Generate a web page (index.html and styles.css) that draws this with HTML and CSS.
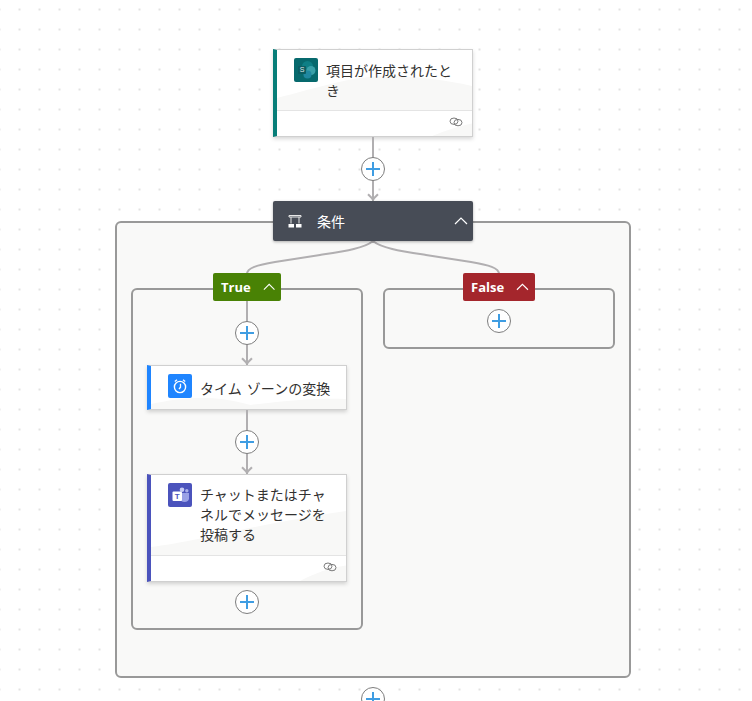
FILE: index.html
```html
<!DOCTYPE html>
<html lang="ja">
<head>
    <meta charset="UTF-8">
    <meta name="viewport" content="width=device-width, initial-scale=1.0">
    <title>フロー</title>
    <link rel="stylesheet" href="styles.css">
</head>
<body>
    <div class="canvas">

        <!-- Trigger -->
        <div class="card card-sharepoint">
            <div class="card-body">
                <svg class="hill" viewBox="0 0 196 60" preserveAspectRatio="none"><path d="M0 48 C40 38 75 26 110 26 C140 26 170 30 196 36 V60 H0 Z"/></svg>
                <svg class="card-icon" viewBox="0 0 24 24">
                    <rect width="24" height="24" rx="2" fill="#07696d"/>
                    <circle cx="13.5" cy="8.5" r="5.5" fill="#0e7f85"/>
                    <circle cx="17" cy="12.5" r="4.5" fill="#3aa0a8"/>
                    <circle cx="13.5" cy="16.5" r="4" fill="#2088a0"/>
                    <rect x="4" y="8" width="8" height="8" rx="1" fill="#0b5d62"/>
                    <text x="8" y="14.4" class="icon-letter sp-letter">S</text>
                </svg>
                <div class="card-title">項目が作成されたとき</div>
            </div>
            <div class="card-footer">
                <svg class="hill" viewBox="0 0 196 26" preserveAspectRatio="none"><path d="M156 26 C170 20 182 16 196 13 V26 Z"/></svg>
                <svg class="link-icon" viewBox="0 0 14 10"><ellipse cx="5" cy="4.2" rx="4" ry="3.2"/><ellipse cx="9" cy="5.6" rx="4" ry="3.2"/></svg>
            </div>
        </div>

        <div class="link arrow"><button class="plus"></button></div>

        <!-- Condition -->
        <div class="scope">
            <div class="scope-header">
                <svg class="scope-icon" viewBox="0 0 14 13">
                    <path d="M1 0.5H13V2H1ZM3 2V8.5M11 2V8.5" fill="none" stroke="#e8e8e8" stroke-width="1"/>
                    <rect x="0.5" y="9" width="5.5" height="3.5" fill="#fff"/>
                    <rect x="8" y="9" width="5.5" height="3.5" fill="#fff"/>
                </svg>
                <span class="scope-title">条件</span>
                <svg class="chevron" viewBox="0 0 14 8"><path d="M1 7L7 1L13 7"/></svg>
            </div>

            <div class="scope-box">
                <svg class="curves" viewBox="0 0 256 34"><path d="M128 0 C120 7 100 10 75 14 L30 21 C12 24 2 27 2 33 M128 0 C136 7 156 10 181 14 L226 21 C244 24 254 27 254 33"/></svg>

                <div class="branches">
                    <div class="branch">
                        <div class="badge badge-true">True <svg class="chevron" viewBox="0 0 14 8"><path d="M1 7L7 1L13 7"/></svg></div>
                        <div class="branch-box">
                            <div class="link arrow"><button class="plus"></button></div>

                            <div class="card card-clock">
                                <div class="card-body">
                                    <svg class="hill" viewBox="0 0 196 43" preserveAspectRatio="none"><path d="M0 38 C30 32 60 28 100 39 C140 34 170 32 196 33 V43 H0 Z"/></svg>
                                    <svg class="card-icon" viewBox="0 0 24 24">
                                        <rect width="24" height="24" rx="2" fill="#1f85ff"/>
                                        <circle cx="12" cy="13" r="5.6" fill="none" stroke="#fff" stroke-width="1.4"/>
                                        <path d="M12.5 9.8V13.2L11 15M6.8 7.6L9 5.8M17.2 7.6L15 5.8" fill="none" stroke="#fff" stroke-width="1.3"/>
                                    </svg>
                                    <div class="card-title single">タイム ゾーンの変換</div>
                                </div>
                            </div>

                            <div class="link arrow"><button class="plus"></button></div>

                            <div class="card card-teams">
                                <div class="card-body">
                                    <svg class="hill" viewBox="0 0 196 80" preserveAspectRatio="none"><path d="M0 80 V72 C50 66 100 50 196 36 V80 Z"/></svg>
                                    <svg class="card-icon" viewBox="0 0 24 24">
                                        <rect width="24" height="24" rx="2" fill="#4b53bc"/>
                                        <circle cx="14" cy="6.8" r="2.3" fill="#c6cbf3"/>
                                        <circle cx="18.8" cy="7.8" r="1.7" fill="#aab0ea"/>
                                        <path d="M12 10H21V15.5C21 17.5 19 19 16.5 19C14 19 12 17.5 12 15.5Z" fill="#9aa1e6"/>
                                        <rect x="4.5" y="8.5" width="9.5" height="9.5" rx="1" fill="#fff"/>
                                        <text x="9.2" y="16" class="icon-letter teams-letter">T</text>
                                    </svg>
                                    <div class="card-title">チャットまたはチャネルでメッセージを投稿する</div>
                                </div>
                                <div class="card-footer">
                                    <svg class="hill" viewBox="0 0 196 26" preserveAspectRatio="none"><path d="M150 26 C165 18 180 12 196 10 V26 Z"/></svg>
                                    <svg class="link-icon" viewBox="0 0 14 10"><ellipse cx="5" cy="4.2" rx="4" ry="3.2"/><ellipse cx="9" cy="5.6" rx="4" ry="3.2"/></svg>
                                </div>
                            </div>

                            <button class="plus plus-end"></button>
                        </div>
                    </div>

                    <div class="branch">
                        <div class="badge badge-false">False <svg class="chevron" viewBox="0 0 14 8"><path d="M1 7L7 1L13 7"/></svg></div>
                        <div class="branch-box branch-empty">
                            <button class="plus"></button>
                        </div>
                    </div>
                </div>
            </div>
        </div>

        <div class="link link-last"><button class="plus"></button></div>
    </div>
</body>
</html>
```

FILE: styles.css
```css
html, body {
    height: 100%;
    margin: 0;
    overflow: hidden;
}

body {
    font-family: "Noto Sans CJK JP", "Noto Sans", sans-serif;
    color: #323130;
    background-color: #fff;
    background-image: radial-gradient(circle at center, #e2e2e2 1px, transparent 1.2px);
    background-size: 20px 20px;
    background-position: 9.5px -0.5px;
}

.canvas {
    width: 746px;
    padding-top: 49px;
    display: flex;
    flex-direction: column;
    align-items: center;
}

/* cards */
.card {
    position: relative;
    width: 200px;
    box-sizing: border-box;
    background: #fff;
    border: 1px solid #d0d0d0;
    border-left: 4px solid #077d78;
    box-shadow: 0 2px 4px rgba(0, 0, 0, 0.16);
    flex-shrink: 0;
}

.card-sharepoint { border-left-color: #077d78; }
.card-clock { border-left-color: #1f85ff; }
.card-teams { border-left-color: #4b53bc; }

.card-body {
    position: relative;
    display: flex;
    align-items: flex-start;
    gap: 8px;
    padding: 8px 10px 10px 17px;
}

.card-clock .card-body {
    padding-bottom: 11px;
}

.card-icon {
    position: relative;
    width: 24px;
    height: 24px;
    flex-shrink: 0;
}

.icon-letter {
    font-family: "Liberation Sans", sans-serif;
    font-size: 8px;
    font-weight: 700;
    fill: #fff;
    text-anchor: middle;
}

.sp-letter {
    font-size: 7px;
    font-weight: 400;
    opacity: 0.85;
}

.teams-letter {
    fill: #4b53bc;
}

.card-title {
    position: relative;
    width: 130px;
    margin-top: 2px;
    font-size: 14px;
    line-height: 20px;
}

.card-teams .card-title {
    margin-top: 1px;
    margin-bottom: 1px;
}

.card-title.single {
    width: 140px;
    margin-top: 4px;
    white-space: nowrap;
    word-spacing: 2px;
}

.card-footer {
    position: relative;
    height: 26px;
    border-top: 1px solid #e4e4e4;
    box-sizing: border-box;
    display: flex;
    justify-content: flex-end;
    padding: 6px 9px 0 0;
}

.hill {
    position: absolute;
    left: 0;
    bottom: 0;
    width: 100%;
    height: 100%;
    fill: #f8f8f7;
}

.link-icon {
    position: relative;
    width: 14px;
    height: 10px;
    fill: none;
    stroke: #7a7a7a;
    stroke-width: 1;
}

/* connectors */
.link {
    position: relative;
    width: 24px;
    height: 64px;
    display: flex;
    align-items: center;
    justify-content: center;
    flex-shrink: 0;
}

.link::before {
    content: "";
    position: absolute;
    top: 0;
    bottom: 0;
    left: 11px;
    width: 2px;
    background: #b1afb1;
}

.arrow::after {
    content: "";
    position: absolute;
    left: 8px;
    bottom: 2px;
    width: 8px;
    height: 8px;
    box-sizing: border-box;
    border-right: 2px solid #b1afb1;
    border-bottom: 2px solid #b1afb1;
    transform: rotate(45deg);
}

.link-last {
    height: 24px;
    margin-top: 9px;
}

.link-last::before {
    display: none;
}

.plus {
    position: relative;
    width: 24px;
    height: 24px;
    padding: 0;
    box-sizing: border-box;
    border: 1px solid #7d7d7d;
    border-radius: 50%;
    background: #fff;
    flex-shrink: 0;
}

.plus::before,
.plus::after {
    content: "";
    position: absolute;
    background: #3f9de2;
}

.plus::before {
    left: 4px;
    right: 4px;
    top: 10px;
    height: 2px;
}

.plus::after {
    top: 4px;
    bottom: 4px;
    left: 10px;
    width: 2px;
}

.plus-end {
    margin-top: 8px;
}

/* condition */
.scope {
    display: flex;
    flex-direction: column;
    align-items: center;
}

.scope-header {
    position: relative;
    z-index: 2;
    width: 200px;
    height: 40px;
    box-sizing: border-box;
    display: flex;
    align-items: center;
    padding: 0 5px 0 15px;
    background: #474c56;
    border-radius: 2px;
    box-shadow: 0 1px 3px rgba(0, 0, 0, 0.3);
    color: #fff;
    font-size: 14px;
}

.scope-icon {
    width: 14px;
    height: 13px;
}

.scope-title {
    flex: 1;
    margin-left: 15px;
}

.chevron {
    width: 14px;
    height: 8px;
    fill: none;
    stroke: #fff;
    stroke-width: 1.2;
}

.scope-box {
    position: relative;
    width: 516px;
    height: 457px;
    box-sizing: border-box;
    margin-top: -20px;
    padding: 50px 14px 0 14px;
    background: #f9f9f8;
    border: 2px solid #999;
    border-radius: 6px;
}

.curves {
    position: absolute;
    top: 18px;
    left: 128px;
    width: 256px;
    height: 34px;
    fill: none;
    stroke: #b1afb1;
    stroke-width: 2;
}

.branches {
    display: flex;
    align-items: flex-start;
    gap: 20px;
}

.branch {
    width: 232px;
    display: flex;
    flex-direction: column;
    align-items: center;
}

.badge {
    position: relative;
    z-index: 1;
    height: 28px;
    box-sizing: border-box;
    display: flex;
    align-items: center;
    gap: 12px;
    padding: 0 6px 0 8px;
    border-radius: 2px;
    color: #fff;
    font-family: "Open Sans", sans-serif;
    font-size: 13px;
    font-weight: 700;
}

.badge-true {
    width: 68px;
    background: #498205;
}

.badge-false {
    width: 72px;
    background: #a4262c;
}

.branch-box {
    width: 100%;
    box-sizing: border-box;
    height: 342px;
    margin-top: -13px;
    padding-top: 11px;
    display: flex;
    flex-direction: column;
    align-items: center;
    border: 2px solid #999;
    border-radius: 6px;
}

.branch-empty {
    height: 61px;
    padding-top: 19px;
}
```
